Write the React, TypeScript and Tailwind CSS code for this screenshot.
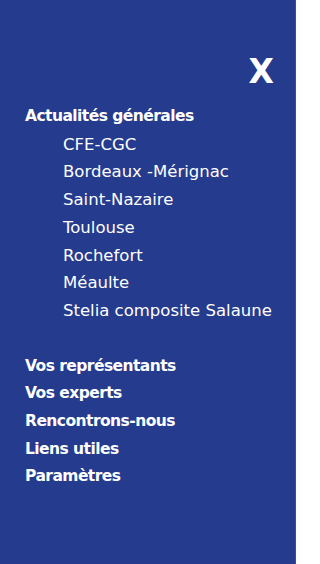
export default function App() {
  const subs = [
    "CFE-CGC",
    "Bordeaux -Mérignac",
    "Saint-Nazaire",
    "Toulouse",
    "Rochefort",
    "Méaulte",
    "Stelia composite Salaune",
  ];
  const mains = [
    "Vos représentants",
    "Vos experts",
    "Rencontrons-nous",
    "Liens utiles",
    "Paramètres",
  ];
  return (
    <div className="flex w-[320px] h-[564px] bg-white" style={{ fontFamily: "'DejaVu Sans', sans-serif" }}>
      <div className="w-[296px] h-full bg-[#253b8e] border-r border-[#3a4d99] flex flex-col text-white">
        <div className="flex justify-end pr-[21px] pt-[52px]">
          <span className="text-[33px] font-bold leading-[40px]">X</span>
        </div>
        <div className="pl-[25px] pt-[11px] flex flex-col">
          <span className="text-[15.5px] font-bold leading-[27.7px] tracking-[-0.55px]">Actualités générales</span>
          {subs.map((s) => (
            <span key={s} className="pl-[38px] text-[16.5px] leading-[27.7px]">{s}</span>
          ))}
          <div className="h-[28px]" />
          {mains.map((s) => (
            <span key={s} className="text-[15.5px] font-bold leading-[27.7px] tracking-[-0.55px]">{s}</span>
          ))}
        </div>
      </div>
      <div className="flex-1" />
    </div>
  );
}
